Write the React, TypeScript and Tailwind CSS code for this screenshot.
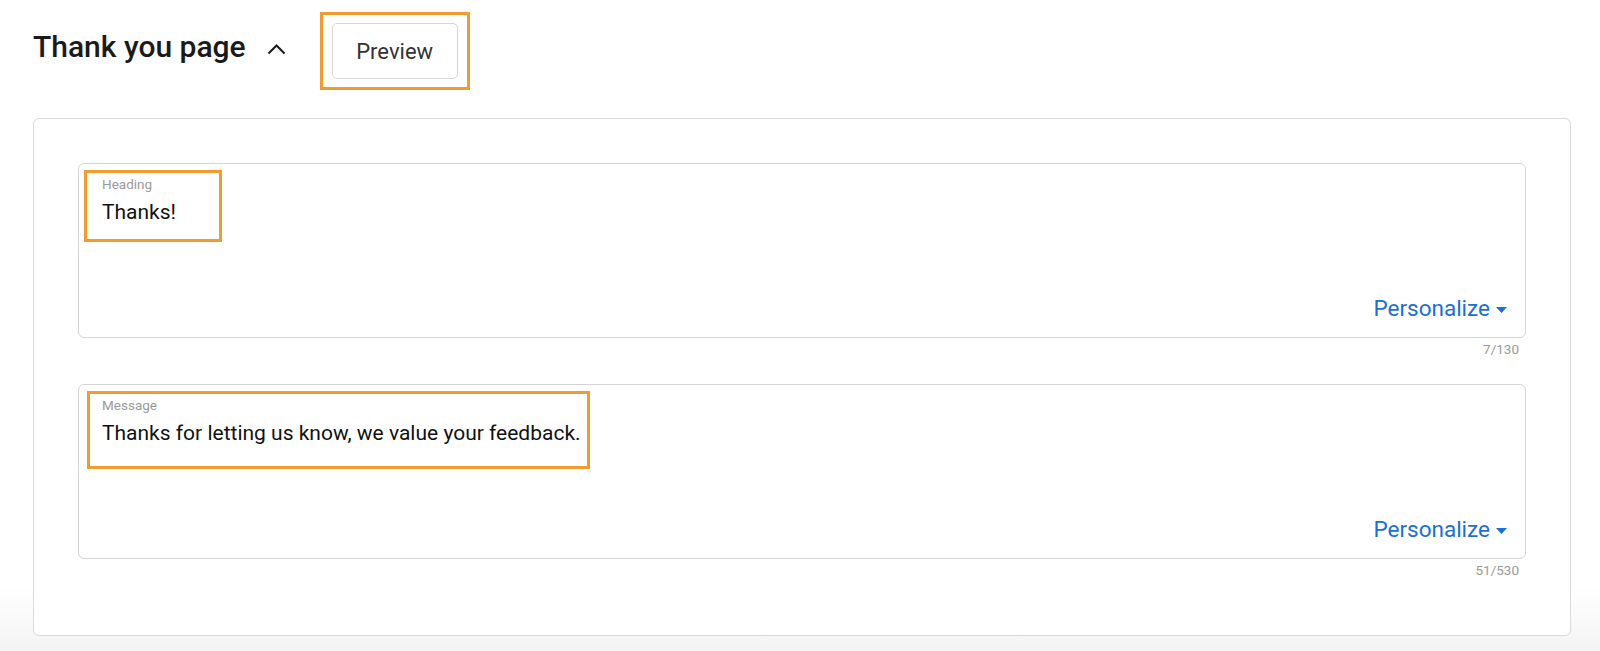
import React from "react";

const font = { fontFamily: "Roboto, 'Liberation Sans', sans-serif" };

const Caret = () => (
  <svg width="11" height="6" viewBox="0 0 11 6" className="ml-[6px] mt-[3px]">
    <polygon points="0,0 11,0 5.5,6" fill="#1a6fd8" />
  </svg>
);

type FieldProps = {
  label: string;
  value: string;
  count: string;
  mark: string;
};

const Field: React.FC<FieldProps> = ({ label, value, count, mark }) => (
  <div>
    <div className="relative h-[175px] border border-[#d4d4d4] rounded-[6px] flex flex-col justify-between pl-[23px] pr-[18px] pt-[12px] pb-[15px]">
      <div>
        <div className="text-[13.5px] leading-[16px] text-[#9a9a9a]">{label}</div>
        <div className="mt-[6px] text-[21px] leading-[28px] text-[#111]">{value}</div>
      </div>
      <div className="flex items-center justify-end">
        <span className="text-[22.5px] leading-[28px] text-[#1a6fd8]">Personalize</span>
        <Caret />
      </div>
      {/* orange annotation */}
      <div className={`absolute top-[6px] border-[3px] border-[#f29b30] ${mark}`} />
    </div>
    <div className="mt-[3px] pr-[7px] text-right text-[13.5px] leading-[16px] text-[#9a9a9a]">
      {count}
    </div>
  </div>
);

const App: React.FC = () => {
  return (
    <div
      className="w-full min-h-[651px] bg-linear-to-b from-white from-90% to-[#f4f4f4] pt-[12px] pb-[15px]"
      style={font}
    >
      <div className="flex items-center pl-[33px]">
        <h1 className="text-[30px] leading-[36px] font-medium text-[#1a1a1a] mb-[8px]">
          Thank you page
        </h1>
        <svg width="19" height="11" viewBox="0 0 19 11" className="ml-[21px] mb-[4px]">
          <polyline points="1.5,9.5 9.5,1.5 17.5,9.5" fill="none" stroke="#1a1a1a" strokeWidth="2" />
        </svg>
        <div className="ml-[34px] border-[3px] border-[#f29b30] px-[9px] py-[8px]">
          <button className="w-[126px] h-[56px] rounded-[5px] border border-[#d6d6d6] bg-white text-[22px] text-[#333]">
            Preview
          </button>
        </div>
      </div>

      <div className="mt-[28px] ml-[33px] mr-[29px] border border-[#dadada] rounded-[6px] bg-white pt-[44px] px-[44px] pb-[57px] flex flex-col gap-[27px]">
        <Field
          label="Heading"
          value="Thanks!"
          count="7/130"
          mark="left-[5px] w-[138px] h-[72px]"
        />
        <Field
          label="Message"
          value="Thanks for letting us know, we value your feedback."
          count="51/530"
          mark="left-[8px] w-[503px] h-[78px]"
        />
      </div>
    </div>
  );
};

export default App;
